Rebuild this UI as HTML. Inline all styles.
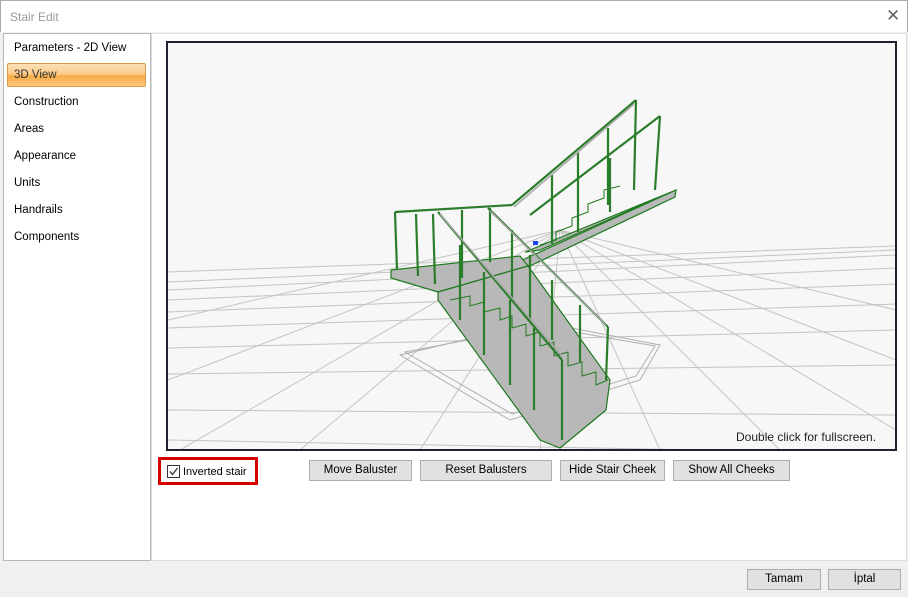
<!DOCTYPE html>
<html><head><meta charset="utf-8"><style>
*{box-sizing:border-box;margin:0;padding:0}
body{width:908px;height:597px;background:#f0f0f0;font-family:"Liberation Sans",sans-serif;font-size:12px;position:relative;overflow:hidden;color:#000}
.title{position:absolute;left:0;top:0;width:908px;height:32px;background:#fff;border:1px solid #aaa;border-bottom:none}
.title span{position:absolute;left:9px;top:9px;color:#999;font-size:12px}
.close{position:absolute;left:885px;top:5px;font-size:17px;color:#666}
.left{position:absolute;left:3px;top:33px;width:148px;height:528px;background:#fff;border:1px solid #b8b8b8}
.item{position:absolute;left:10px;font-size:11.5px}
.sel{position:absolute;left:3px;top:29px;width:139px;height:24px;border:1px solid #d99a4a;border-radius:2px;background:linear-gradient(#fde0b8 0%,#fbcb8a 45%,#f7ab45 55%,#fbc77a 100%)}
.main{position:absolute;left:151px;top:33px;width:756px;height:528px;background:#fff;border:1px solid #ddd}
.vp{position:absolute;left:166px;top:41px;width:731px;height:410px;border:2px solid #202030;background:#f7f7f7;overflow:hidden}
.btn{position:absolute;height:21px;background:#e1e1e1;border:1px solid #adadad;text-align:center;line-height:19px;font-size:11.5px}
.chk{position:absolute;left:158px;top:457px;width:100px;height:28px;border:3px solid #d40000}
.box{position:absolute;left:6px;top:5px;width:13px;height:13px;border:1px solid #333;background:#fff}
</style></head><body>
<div class="title"><span>Stair Edit</span><div class="close">✕</div></div>
<div class="main"></div>
<div class="left">
<div class="item" style="top:8px">Parameters - 2D View</div>
<div class="sel"></div>
<div class="item" style="top:35px;color:#333">3D View</div>
<div class="item" style="top:62px">Construction</div>
<div class="item" style="top:89px">Areas</div>
<div class="item" style="top:116px">Appearance</div>
<div class="item" style="top:143px">Units</div>
<div class="item" style="top:170px">Handrails</div>
<div class="item" style="top:197px">Components</div>
</div>
<div class="vp">
<svg width="727" height="406" viewBox="168 43 727 406" style="position:absolute;left:0;top:0">
<g stroke="#c4c4c4" stroke-width="1" fill="none">
<line x1="168" y1="290" x2="896" y2="255"/>
<line x1="168" y1="300" x2="896" y2="268"/>
<line x1="168" y1="312" x2="896" y2="284"/>
<line x1="168" y1="328" x2="896" y2="304"/>
<line x1="168" y1="348" x2="896" y2="330"/>
<line x1="168" y1="374" x2="896" y2="365"/>
<line x1="168" y1="410" x2="896" y2="415"/>
<line x1="168" y1="440" x2="700" y2="450"/>
<line x1="168" y1="272" x2="896" y2="246"/>
<line x1="168" y1="282" x2="896" y2="250"/>
<line x1="560" y1="230" x2="180" y2="450"/>
<line x1="560" y1="230" x2="300" y2="450"/>
<line x1="560" y1="230" x2="420" y2="450"/>
<line x1="560" y1="230" x2="540" y2="450"/>
<line x1="560" y1="230" x2="660" y2="450"/>
<line x1="560" y1="230" x2="780" y2="450"/>
<line x1="560" y1="230" x2="896" y2="430"/>
<line x1="560" y1="230" x2="896" y2="360"/>
<line x1="560" y1="230" x2="896" y2="310"/>
<line x1="560" y1="230" x2="168" y2="380"/>
<line x1="560" y1="230" x2="168" y2="320"/>
<polygon points="400,355 540,322 660,345 640,380 510,420" stroke="#b0b0b0"/>
<polygon points="405,352 540,326 655,346 636,376 512,414" stroke="#b0b0b0"/>
</g>
<g fill="#b8b8b8" stroke="#1f7a1f" stroke-width="1.2">
<polygon points="525,252 676,190 540,250"/>
<polygon points="518,262 676,190 675,197 530,266"/>
<polygon points="391,270 520,256 528,266 438,292 391,278"/>
<polygon points="438,292 528,266 610,380 606,410 560,448 540,440 438,300"/>
</g>
<g stroke="#1f7a1f" stroke-width="1" fill="none">
<polyline points="450,300 470,296 470,306 484,302 484,312 500,308 500,320 512,316 512,328 526,324 526,336 540,332 540,346 554,342 554,356 568,352 568,366 582,362 582,376 596,372 596,385 608,380"/>
<polyline points="540,245 556,240 556,232 572,226 572,218 588,212 588,204 604,198 604,190 620,186"/>
</g>
<g stroke="#2b7d2b" stroke-width="2.2" fill="none">
<line x1="395" y1="212" x2="512" y2="205"/>
<line x1="395" y1="212" x2="397" y2="270"/>
<line x1="416" y1="214" x2="418" y2="276"/>
<line x1="433" y1="214" x2="435" y2="284"/>
<line x1="462" y1="210" x2="462" y2="278"/>
<line x1="490" y1="208" x2="490" y2="262"/>
<line x1="512" y1="205" x2="636" y2="100"/>
<line x1="530" y1="215" x2="660" y2="116"/>
<line x1="636" y1="100" x2="634" y2="190"/>
<line x1="660" y1="116" x2="655" y2="190"/>
<line x1="578" y1="152" x2="578" y2="232"/>
<line x1="552" y1="175" x2="552" y2="244"/>
<line x1="608" y1="128" x2="608" y2="205"/>
<line x1="610" y1="158" x2="610" y2="212"/>
<line x1="438" y1="212" x2="562" y2="360"/>
<line x1="488" y1="208" x2="608" y2="327"/>
<line x1="608" y1="327" x2="606" y2="380"/>
<line x1="562" y1="360" x2="562" y2="440"/>
<line x1="534" y1="328" x2="534" y2="410"/>
<line x1="510" y1="300" x2="510" y2="385"/>
<line x1="484" y1="272" x2="484" y2="355"/>
<line x1="460" y1="245" x2="460" y2="320"/>
<line x1="552" y1="280" x2="552" y2="340"/>
<line x1="580" y1="305" x2="580" y2="362"/>
<line x1="530" y1="255" x2="530" y2="320"/>
<line x1="512" y1="230" x2="512" y2="300"/>
</g>
<g stroke="#a8a8a8" stroke-width="1.5">
<line x1="440" y1="214" x2="562" y2="356"/>
<line x1="490" y1="211" x2="606" y2="325"/>
<line x1="514" y1="207" x2="634" y2="104"/>
</g>
<rect x="533" y="241" width="5" height="4" fill="#1e40ff"/>
<text x="736" y="441" font-family="Liberation Sans" font-size="12" fill="#222">Double click for fullscreen.</text>
</svg>
</div>
<div class="chk"><div class="box"><svg width="11" height="11" style="position:absolute;left:0;top:0"><polyline points="2,5.5 4.5,8.5 9.5,2" stroke="#333" stroke-width="1.3" fill="none"/></svg></div><span style="position:absolute;left:22px;top:6px;font-size:11px">Inverted stair</span></div>
<div class="btn" style="left:309px;top:460px;width:103px">Move Baluster</div>
<div class="btn" style="left:420px;top:460px;width:132px">Reset Balusters</div>
<div class="btn" style="left:560px;top:460px;width:105px">Hide Stair Cheek</div>
<div class="btn" style="left:673px;top:460px;width:117px">Show All Cheeks</div>
<div class="btn" style="left:747px;top:569px;width:74px">Tamam</div>
<div class="btn" style="left:828px;top:569px;width:73px">İptal</div>
</body></html>
